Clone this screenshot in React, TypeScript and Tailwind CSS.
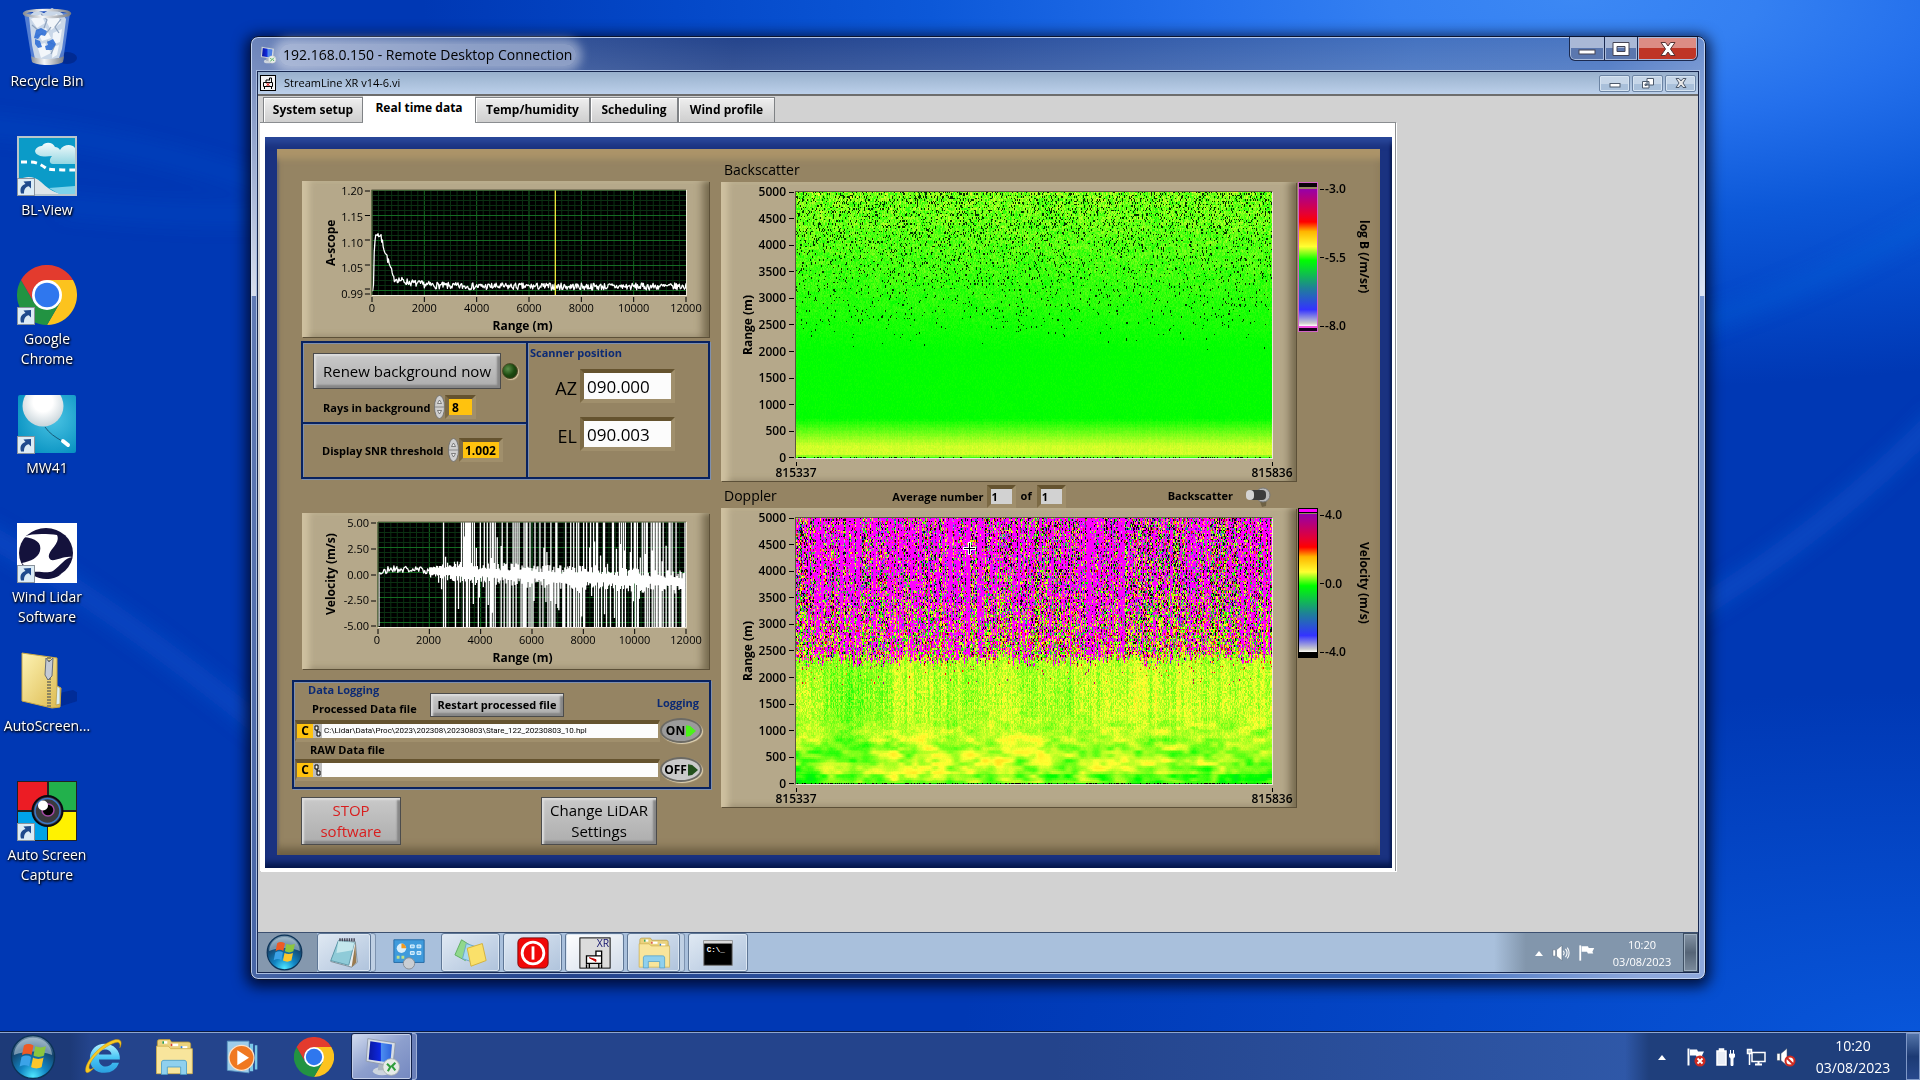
import React, { useEffect, useRef } from 'react';

type Painter = (x: number, r: number, rand: () => number, col: number[]) => [number, number, number];

// Small seeded generator so the plots come out the same on every render
const makeRandom = (seed: number) => () => {
  seed = (seed + 0x6d2b79f5) | 0;
  let t = Math.imul(seed ^ (seed >>> 15), 1 | seed);
  t = (t + Math.imul(t ^ (t >>> 7), 61 | t)) ^ t;
  return ((t ^ (t >>> 14)) >>> 0) / 4294967296;
};

const hash = (x: number, y: number) => {
  const n = Math.sin(x * 127.1 + y * 311.7) * 43758.5453;
  return n - Math.floor(n);
};

const smoothNoise = (x: number, y: number) => {
  const ix = Math.floor(x);
  const iy = Math.floor(y);
  const fx = (x - ix) * (x - ix) * (3 - 2 * (x - ix));
  const fy = (y - iy) * (y - iy) * (3 - 2 * (y - iy));
  const top = hash(ix, iy) * (1 - fx) + hash(ix + 1, iy) * fx;
  const bottom = hash(ix, iy + 1) * (1 - fx) + hash(ix + 1, iy + 1) * fx;
  return top * (1 - fy) + bottom * fy;
};

const SCALE: [number, number, number, number][] = [
  [0, 205, 205, 205],
  [0.13, 51, 51, 255],
  [0.3, 30, 130, 150],
  [0.48, 0, 255, 0],
  [0.6, 255, 255, 50],
  [0.7, 255, 180, 0],
  [0.8, 255, 0, 0],
  [1, 150, 0, 170],
];

const colorAt = (t: number): [number, number, number] => {
  if (t < 0) return [0, 0, 0];
  if (t > 1) return [255, 0, 255];
  for (let i = 1; i < SCALE.length; i++) {
    const a = SCALE[i - 1];
    const b = SCALE[i];
    if (t <= b[0]) {
      const f = (t - a[0]) / (b[0] - a[0]);
      return [a[1] + (b[1] - a[1]) * f, a[2] + (b[2] - a[2]) * f, a[3] + (b[3] - a[3]) * f];
    }
  }
  return [255, 0, 255];
};

const paintBackscatter: Painter = (x, r, rand, col) => {
  if (r < 15) return rand() < 0.3 ? [0, 40, 0] : [60, 255, 20];
  if (r > 1900) {
    const p = Math.pow((r - 1900) / 3100, 1.4) * 0.17;
    if (rand() < p) return [0, 50, 0];
  }
  let t = 0.48;
  if (r < 750) t += 0.098 * Math.min(1, (750 - r) / 520) * (r < 60 ? 0.7 : 1);
  if (r > 2000) {
    const high = (r - 2000) / 3000;
    t += high * (0.02 + rand() * 0.08) + (smoothNoise(x / 8, r / 90) - 0.5) * 0.03 * high;
  }
  t += (rand() - 0.5) * 0.012 + (r < 750 ? col[x] * 0.003 : 0);
  return colorAt(Math.max(0.465, Math.min(0.6, t)));
};

const paintDoppler: Painter = (x, r, rand, col) => {
  if (r < 15) return rand() < 0.3 ? [0, 0, 0] : [0, 200, 0];
  const limit = 2160 + hash(x, 9) * 260 + smoothNoise(x / 14, 5) * 120;
  if (r > limit) {
    const depth = Math.min(1, (r - limit) / 1700);
    const streak = hash(x, 3);
    const magenta = 0.26 + depth * 0.27 + (streak - 0.45) * 0.9 + (smoothNoise(x / 25, 2) - 0.5) * 0.3;
    if (rand() < magenta) return [255, 0, 255];
    const k = rand();
    if (k < 0.04 + depth * 0.22) return [20, 0, 20];
    if (k < 0.24 + depth * 0.18) return colorAt(0.72 + rand() * 0.28);
    return colorAt(rand() < 0.9 - depth * 0.35 ? 0.46 + rand() * 0.22 : rand() * 0.7);
  }
  if (r > 1800 && rand() < (r - 1800) / 14000) return colorAt(0.7 + rand() * 0.3);
  const upper = Math.max(0, Math.min(1, (r - 600) / 900));
  const drift = (smoothNoise(x / 55, r / 1500) - 0.5) * 0.06;
  const streaks = col[x] * 0.016 * upper + (smoothNoise(x / 4, 8) - 0.5) * 0.03 * upper;
  const grain = (rand() - 0.5) * (0.01 + 0.055 * upper);
  const blobs =
    (1 - upper) * ((smoothNoise(x / 16, r / 140) - 0.5) * 0.09 + (smoothNoise(x / 7 + 40, r / 75) - 0.5) * 0.07);
  const floor = r < 200 ? -0.03 : 0;
  return colorAt(0.555 + drift + streaks + grain + blobs + floor);
};

const Heatmap: React.FC<{ paint: Painter; seed: number; label: string }> = ({ paint, seed, label }) => {
  const ref = useRef<HTMLCanvasElement>(null);

  useEffect(() => {
    const canvas = ref.current;
    const ctx = canvas?.getContext('2d');
    if (!canvas || !ctx) return;
    const { width, height } = canvas;
    const rand = makeRandom(seed);
    const col = Array.from({ length: width }, () => rand() * 2 - 1);
    const image = ctx.createImageData(width, height);
    for (let y = 0; y < height; y++) {
      const r = (1 - (y + 0.5) / height) * 5000;
      for (let x = 0; x < width; x++) {
        const [red, green, blue] = paint(x, r, rand, col);
        image.data.set([red, green, blue, 255], (y * width + x) * 4);
      }
    }
    ctx.putImageData(image, 0, 0);
  }, [paint, seed]);

  return <canvas ref={ref} width={478} height={178} aria-label={label} className="block h-full w-full [image-rendering:pixelated]" />;
};

/* ---------- icons ---------- */

const ShortcutArrow = () => (
  <svg viewBox="0 0 18 18" className="absolute bottom-0 left-0 h-[18px] w-[18px]">
    <rect x="0.5" y="0.5" width="17" height="17" fill="#dcecf6" stroke="#8a939c" />
    <path d="M4 15.500c-1.500-5 .5-8.500 4.500-9.500L6.500 3.500 14 3v7.500l-2.200-2.300C8.500 9 7 11 7 15.500z" fill="#1f4a8c" />
  </svg>
);

const RecycleBin = () => (
  <svg viewBox="0 0 60 60" className="h-full w-full">
    <defs>
      <linearGradient id="binRim" x1="0" x2="1">
        <stop offset="0" stopColor="#8a8f96" /><stop offset=".4" stopColor="#f4f6f8" /><stop offset="1" stopColor="#777c84" />
      </linearGradient>
    </defs>
    <ellipse cx="50" cy="51" rx="10" ry="6" fill="#001c70" opacity=".5" />
    <path d="M7 6l8 48c3 5 27 5 31 0l7-48z" fill="#6f95dc" opacity=".75" />
    <path d="M12 9l7-6 8 3 8-5 10 5 4 6-2 16-2 14-3 9-14 3-10-2-3-14z" fill="#c9d7e8" />
    <path d="M14 12l10-5 4 9-8 5zM28 12l12-5 4 9-10 7zM20 24l9-3 5 10-9 3zM36 26l9-4-2 13-8 3zM20 38l8-2 6 10-10 5zM36 40l6-2-2 10-5 3z" fill="#f2f6fa" />
    <path d="M24 7l6 6-3 8M44 12l-6 8 4 6M18 30l8-4M30 34l8 4-4 9M15 18l7 6M34 20l-6 8" fill="none" stroke="#8fa3bd" strokeWidth="1.200" />
    <path d="M19 23l5-2 6 3-2 5-4-1-3 4-4-1zM30 35l6-3 3 5-4 6-6 0-1-4 3-1zM18 32l5 2 2 6-4 1-3-4z" fill="#2f6fd6" opacity=".9" />
    <path d="M14 49c5 4 28 4 33 0l-1 6c-5 4-26 4-31 0z" fill="url(#binRim)" />
    <ellipse cx="30" cy="6.500" rx="23" ry="3.500" fill="none" stroke="url(#binRim)" strokeWidth="2.500" />
  </svg>
);

const BlView = () => (
  <svg viewBox="0 0 60 60" className="h-full w-full">
    <defs><linearGradient id="cloud" x1="0" y1="0" x2="0" y2="1"><stop offset="0" stopColor="#f4fbfc" /><stop offset="1" stopColor="#93d6e2" /></linearGradient></defs>
    <rect width="60" height="60" fill="#b9c6cc" />
    <rect x="2" y="2" width="56" height="56" fill="#0b9bc8" />
    <path d="M18 15c1-4 5-5 7-5 3-5 11-4 13 1 2 0 4 1 5 3 3-5 11-7 15-2v16H36c-4 0-4-5-1-8-7 1-16 1-17-5z" fill="url(#cloud)" />
    <path d="M4 26h9c8 0 13 4 17 7 4 1 20 1 28 1" fill="none" stroke="#fff" strokeWidth="3" strokeDasharray="6 4" />
    <path d="M2 58V44c8-5 16-3 22 2 5 5 12 10 20 12z" fill="#dfe5e8" />
    <path d="M32 52l26-2v8H42z" fill="#7fd3ea" />
  </svg>
);

const Chrome = () => (
  <svg viewBox="0 0 48 48" className="h-full w-full">
    <path d="M24 24L3.200 12A24 24 0 0 1 44.800 12H24z" fill="#e33b2e" />
    <path d="M24 12h20.800A24 24 0 0 1 24 48l10.400-18z" fill="#fcc31e" />
    <path d="M3.200 12L13.600 30 24 36l10.400-6L24 48A24 24 0 0 1 3.200 12z" fill="#229342" />
    <path d="M3.200 12L13.600 30A12 12 0 0 1 24 12z" fill="#e33b2e" />
    <circle cx="24" cy="24" r="12" fill="#fff" />
    <circle cx="24" cy="24" r="9.800" fill="#2f77ee" />
  </svg>
);

const Balloon = () => (
  <svg viewBox="0 0 60 60" className="h-full w-full">
    <defs>
      <radialGradient id="balloonBg" cx=".6" cy=".4" r=".7"><stop offset="0" stopColor="#4cc4e4" /><stop offset="1" stopColor="#0590c0" /></radialGradient>
      <radialGradient id="balloon" cx=".5" cy=".4" r=".6"><stop offset=".4" stopColor="#fff" /><stop offset="1" stopColor="#c8d4da" /></radialGradient>
      <clipPath id="balloonClip"><rect x="1" y="1" width="58" height="58" rx="2" /></clipPath>
    </defs>
    <g clipPath="url(#balloonClip)">
      <rect width="60" height="60" fill="url(#balloonBg)" />
      <circle cx="26" cy="12" r="20.500" fill="url(#balloon)" />
      <path d="M28 33c4 6 10 10 17 14" fill="none" stroke="#175a78" />
      <path d="M46 47l5 4" stroke="#fff" strokeWidth="4" strokeLinecap="round" />
    </g>
  </svg>
);

const WindLidar = () => (
  <svg viewBox="0 0 60 60" className="h-full w-full">
    <rect width="60" height="60" fill="#fff" />
    <ellipse cx="29" cy="30" rx="27" ry="25" fill="#14123c" />
    <path d="M6 14c10-4 24-3 34-2 2 4 0 8-4 13-4 5-6 9-2 12 6 1 12-4 21-3-7 1-11 8-19 14-7 3-12 0-19 1-4-1-8-4-12-9 9-2 16-5 18-12 2-8-4-13-17-14z" fill="#fff" />
    <path d="M16 52c8 6 22 5 28-1-10 2-16-2-28 1z" fill="#14123c" />
  </svg>
);

const ZipFolder = () => (
  <svg viewBox="0 0 60 60" className="h-full w-full">
    <defs><linearGradient id="zip" x1="0" y1="0" x2="1" y2="1"><stop offset="0" stopColor="#fdf3b4" /><stop offset="1" stopColor="#dcb94e" /></linearGradient></defs>
    <path d="M38 56l32-10-14-8-18 4z" fill="#00207c" opacity=".5" />
    <path d="M5 1l35 5v28l4 2-1 19-8 1L5 49z" fill="url(#zip)" stroke="#c9a845" />
    <path d="M40 34l3 2v16l-4 1z" fill="#dbeef4" stroke="#b59b42" strokeWidth=".7" />
    <path d="M32 5v50" stroke="#8e8660" strokeWidth="4" strokeDasharray="2 1" />
    <path d="M29 6l3 4 4-4-1 18-4 4-3-5z" fill="#c4cad4" stroke="#666e7a" />
  </svg>
);

const AutoScreen = () => (
  <svg viewBox="0 0 60 60" className="h-full w-full">
    <rect width="60" height="60" fill="#222" />
    <rect x="1" y="1" width="29" height="28" fill="#ec1c24" />
    <rect x="32" y="1" width="27" height="28" fill="#22b14c" />
    <rect x="1" y="31" width="29" height="28" fill="#00a2e8" />
    <rect x="31" y="31" width="28" height="28" fill="#fff200" />
    <circle cx="30.500" cy="30" r="15" fill="#3a3a3e" stroke="#0a0a12" strokeWidth="2" />
    <circle cx="30.500" cy="30" r="12.500" fill="none" stroke="#3d78c8" strokeWidth="1.500" />
    <circle cx="31" cy="29" r="6" fill="#000" stroke="#a349a4" strokeWidth="1.500" />
    <circle cx="26" cy="24.500" r="5" fill="#fff" />
  </svg>
);

const StartOrb = () => (
  <svg viewBox="0 0 48 48" className="h-full w-full">
    <defs>
      <radialGradient id="orb" cx=".5" cy=".95" r=".9">
        <stop offset="0" stopColor="#4fe6ff" /><stop offset=".35" stopColor="#1286c4" /><stop offset=".75" stopColor="#14456e" /><stop offset="1" stopColor="#6f8ea6" />
      </radialGradient>
    </defs>
    <circle cx="24" cy="24" r="22.500" fill="url(#orb)" stroke="#0c3358" strokeWidth="1.500" />
    <path d="M4 22C5 11 13 4 24 4s19 7 20 18c-12-5-28-5-40 0z" fill="#d4e4ee" opacity=".5" />
    <path d="M14.500 12c3-2 6-2 10 0l-2 10c-3-2-6-2-10 0z" fill="#ee5a24" />
    <path d="M26.500 12.500c4 2 7 2 11 0l-2 10c-4 2-7 2-11 0z" fill="#8cc63f" />
    <path d="M12 24c4-2 7-2 10 0l-2 10c-3-2-6-2-10 0z" fill="#3ba3e8" />
    <path d="M24 24.500c4 2 7 2 11 0l-2 10c-4 2-7 2-11 0z" fill="#fbc62c" />
  </svg>
);

const InternetExplorer = () => (
  <svg viewBox="0 0 48 48" className="h-full w-full">
    <defs><linearGradient id="ie" x1="0" y1="0" x2="0" y2="1"><stop offset="0" stopColor="#b5f0ff" /><stop offset=".5" stopColor="#46c5f5" /><stop offset="1" stopColor="#2a9fe0" /></linearGradient></defs>
    <path d="M43 27H18c0 10 12 11 16 4h8c-3 8-9 12-17 12C14 43 7 36 7 26 7 15 15 8 25 8s19 8 18 19zM18 21h15c-1-8-14-8-15 0z" fill="url(#ie)" />
    <path d="M12 37c-6 7-11 8-10 1C4 26 22 7 38 3c7-1 8 4 5 10 1-5-1-8-6-6C24 11 8 26 6 36c0 4 3 3 6 1z" fill="#f8c922" stroke="#c9920c" strokeWidth=".6" />
  </svg>
);

const Explorer = () => (
  <svg viewBox="0 0 48 48" className="h-full w-full">
    <path d="M4 6c0-2 1-3 3-3h12l2 3h20c2 0 3 1 3 3v32H4z" fill="#ead27e" stroke="#b99a3c" />
    <path d="M10 5h6v3h-6z" fill="#fff" /><path d="M10 5h2v3h-2z" fill="#2d9b46" />
    <path d="M20 8h9v3h-9z" fill="#fff" /><path d="M20 8h2v3h-2z" fill="#d8432f" />
    <path d="M32 11h8v3h-8z" fill="#fff" /><path d="M32 11h2v3h-2z" fill="#2d7fd6" />
    <path d="M3 11h14l3 3h26v30H3z" fill="#f8e59c" stroke="#cfb050" />
    <path d="M9 45V31c0-2 1-3 3-3h24c2 0 3 1 3 3v14h-7V36H16v9z" fill="#8fd0ee" stroke="#4b9cc6" />
  </svg>
);

const MediaPlayer = () => (
  <svg viewBox="0 0 48 48" className="h-full w-full">
    <path d="M4 5h26v38l-26-3z" fill="#9ecdea" stroke="#5b9ac4" />
    <path d="M31 8h4v33h-4zM37 10h3v29h-3z" fill="#7ac8e8" />
    <circle cx="21" cy="25" r="15" fill="#f07820" stroke="#fbe3cc" strokeWidth="1.500" />
    <path d="M16 16l14 9-14 9z" fill="#fff" />
  </svg>
);

const RemoteDesktop = () => (
  <svg viewBox="0 0 48 48" className="h-full w-full">
    <defs><linearGradient id="screen" x1="0" y1="0" x2="1" y2="0"><stop offset="0" stopColor="#0a18a0" /><stop offset=".5" stopColor="#0d27e0" /><stop offset=".55" stopColor="#4b8cf0" /><stop offset="1" stopColor="#2f62dc" /></linearGradient></defs>
    <ellipse cx="24" cy="41" rx="11" ry="5" fill="#cdd5de" />
    <path d="M20 32h9l1 8h-11z" fill="#aab4c0" />
    <path d="M7 2l33 5-3 28-32-6z" fill="#d6dde6" stroke="#8a95a5" />
    <path d="M10 5l26 4-2 22-26-4z" fill="url(#screen)" />
    <circle cx="35" cy="36" r="10" fill="#e6ebe8" stroke="#a8b0ae" />
    <path d="M30 32l4 4-3 5M40 31l-4 4 4 5" fill="none" stroke="#2f9e3c" strokeWidth="2.500" />
  </svg>
);

const Notepad = () => (
  <svg viewBox="0 0 36 36" className="h-full w-full">
    <path d="M13 4l17 2 2 22-6 5L4 27z" fill="#e9eef0" stroke="#7c8c96" />
    <path d="M12 5l17 2-6 24-19-5z" fill="#8fcbd8" stroke="#5b97a8" />
    <path d="M12 5l17 2-2 8-17 3z" fill="#d1edf1" opacity=".8" />
    <path d="M13 4h17" stroke="#445" strokeWidth="3" strokeDasharray="1.500 1" />
    <path d="M30 8l1 20-5 5z" fill="#9a7b50" />
  </svg>
);

const ControlPanel = () => (
  <svg viewBox="0 0 36 36" className="h-full w-full">
    <path d="M2 4h32v24H2z" fill="#3f9bdc" stroke="#2469a4" />
    <circle cx="10" cy="13" r="5" fill="#d9eefa" /><path d="M10 13V8a5 5 0 0 1 5 5z" fill="#f39a1e" />
    <path d="M19.500 9.500h4v3h-4zM26.500 9.500h4v3h-4zM19.500 16.500h4v3h-4zM26.500 16.500h4v3h-4z" fill="#7fc4f0" stroke="#e8f6ff" />
    <path d="M5 21h3v3H5zM10 21h3v3h-3z" fill="#bfe08a" />
    <circle cx="18" cy="29" r="6" fill="#c9ced3" stroke="#858c94" />
  </svg>
);

const StickyNotes = () => (
  <svg viewBox="0 0 36 36" className="h-full w-full">
    <path d="M8 4l11 7-7 15L1 20z" fill="#90d88c" stroke="#5eae60" />
    <path d="M13 8l12 4-4 16-12-4z" fill="#a6d9f0" stroke="#6ba6c8" />
    <path d="M14 13l16-5 4 18-16 6z" fill="#fae06a" stroke="#d2b03c" />
  </svg>
);

const PowerIcon = () => (
  <svg viewBox="0 0 36 36" className="h-full w-full">
    <rect x="2" y="2" width="32" height="32" rx="5" fill="#f00808" stroke="#7c0a0a" />
    <circle cx="18" cy="18" r="11.500" fill="none" stroke="#fff" strokeWidth="3" />
    <path d="M18 11v14" stroke="#fff" strokeWidth="3" />
  </svg>
);

const XrIcon = () => (
  <svg viewBox="0 0 36 36" className="h-full w-full">
    <rect x="2" y="2" width="32" height="32" fill="#dcdcdc" stroke="#000" />
    <text x="33" y="12" textAnchor="end" fontSize="11" fontFamily="Open Sans, sans-serif" fill="#14146e">XR</text>
    <path d="M9 21h16v8H9zM12 29v5M22 29v5M9 34v-4M25 34v-4M19 21v-5h6v5M24 16h-2" fill="#fff" stroke="#000" strokeWidth="1.400" />
    <path d="M12 23l7 2v2z" fill="#c40000" stroke="#c40000" />
  </svg>
);

const LabviewIcon = () => (
  <svg viewBox="0 0 16 16" className="h-4 w-4 shrink-0">
    <rect x="0.500" y="0.500" width="15" height="15" fill="#f4f4f4" stroke="#000" />
    <path d="M3.500 7.500h9v4h-9zM4.500 12v2M11.500 12v2M6 7V5h4M9.500 5V3h2v4" fill="none" stroke="#000" />
    <path d="M6.500 8l3 3M9.500 8l-3 3" stroke="#c00" />
  </svg>
);

const CommandPrompt = () => (
  <svg viewBox="0 0 36 36" className="h-full w-full">
    <rect x="3" y="5" width="30" height="26" fill="#000" stroke="#777" />
    <path d="M3 5h30v3H3z" fill="#d9d9d9" />
    <text x="6" y="17" fontSize="8" fontFamily="Liberation Mono, monospace" fontWeight="700" fill="#fff">C:\_</text>
  </svg>
);

const FlagIcon: React.FC<{ error?: boolean }> = ({ error }) => (
  <svg viewBox="0 0 20 20" className="h-full w-full">
    <path d="M2.500 1.500v17" stroke="#fff" strokeWidth="2" />
    <path d="M4 2.500h7l1 2h6l-2 4 1 2h-6l-1-2H4z" fill="#fff" />
    {error && (
      <>
        <circle cx="14" cy="14" r="5.500" fill="#cf2a20" />
        <path d="M11.500 11.500l5 5M16.500 11.500l-5 5" stroke="#fff" strokeWidth="1.800" />
      </>
    )}
  </svg>
);

const SpeakerIcon: React.FC<{ muted?: boolean }> = ({ muted }) => (
  <svg viewBox="0 0 20 20" className="h-full w-full">
    <path d="M1 6.500h3v7H1zM5 6.500l6-5v17l-6-5z" fill="#fff" stroke="#44546a" strokeWidth=".5" />
    {muted ? (
      <>
        <circle cx="14" cy="14" r="4.500" fill="#fff" stroke="#cf2a20" strokeWidth="2" />
        <path d="M11 11l6 6" stroke="#cf2a20" strokeWidth="2" />
      </>
    ) : (
      <path d="M12.500 7.500q2 2.500 0 5M15 5.500q3.500 4.500 0 9M17 4q4 6 0 12" fill="none" stroke="#fff" strokeWidth="1.200" />
    )}
  </svg>
);

const BatteryIcon = () => (
  <svg viewBox="0 0 20 20" className="h-full w-full">
    <path d="M1 4h9v14H1zM3.500 2h4v2h-4z" fill="#e8edf5" stroke="#fff" strokeWidth="1.500" />
    <path d="M11.500 3v16" stroke="#1b2f58" />
    <path d="M13.500 7h5v2q0 2-1.500 2v7.500h-2V11q-1.500 0-1.500-2zM14.500 3v4M17.500 3v4" fill="#fff" stroke="#fff" />
  </svg>
);

const NetworkIcon = () => (
  <svg viewBox="0 0 20 20" className="h-full w-full">
    <path d="M6 5.500h13v9H6z" fill="#24406e" stroke="#fff" strokeWidth="1.500" />
    <path d="M9 17.500h7M12.500 15v2" stroke="#fff" strokeWidth="2" />
    <path d="M1.500 2.500h4v4h-4zM3.500 7v11" fill="#aebcd0" stroke="#fff" strokeWidth="1.500" />
  </svg>
);

const UpArrow = () => (
  <svg viewBox="0 0 10 6" className="h-[6px] w-[10px]"><path d="M1 6l4-5L9 6z" fill="#fff" /></svg>
);

/* ---------- instrument controls ---------- */

const BEVEL =
  'border border-[#4c4c4c] bg-gradient-to-b from-[#c9c9c9] to-[#adadad] shadow-[inset_2px_2px_2px_#dedede,inset_-3px_-3px_2px_#868686]';
const SUNKEN = 'border-4 border-t-[#65532f] border-r-[#a08f6c] border-b-[#a08f6c] border-l-[#7c6a45]';
const GROUP = 'border-2 border-[#082260] shadow-[inset_1px_1px_0_#7f90ae,1px_1px_0_#7f90ae]';
const RAISED = 'bg-[#b5a88a] shadow-[inset_10px_2px_6px_-3px_#cfc1a0,inset_-10px_-2px_8px_-4px_#766a4e,1px_1px_0_#5c5038]';

const Spinner: React.FC<{ name: string }> = ({ name }) => (
  <button aria-label={name} className="h-6 w-[11px]">
    <svg viewBox="0 0 11 24" className="h-full w-full">
      <ellipse cx="5.500" cy="12" rx="5" ry="11.500" fill="#cfcfcf" stroke="#6b6b6b" strokeWidth=".8" />
      <path d="M1 12h9" stroke="#888" />
      <path d="M3.500 8.500l2-3.500 2 3.500zM3.500 15.500h4l-2 3.500z" fill="#f4f4f4" stroke="#555" strokeWidth=".7" />
    </svg>
  </button>
);

const Readout: React.FC<{ id: string; label: string; value: string }> = ({ id, label, value }) => (
  <div className="flex items-center justify-end gap-[3px]">
    <label htmlFor={id} className="pt-1 text-[18px]">{label}</label>
    <input id={id} readOnly value={value} className={`h-[34px] w-[95px] bg-[#fcfcfc] px-[3px] text-[17px] text-black ${SUNKEN}`} />
  </div>
);

const PathRow: React.FC<{ id: string; value: string; on: boolean }> = ({ id, value, on }) => (
  <div className="flex items-center">
    <div className={`flex h-[22px] flex-1 ${SUNKEN} border-x-2`}>
      <span className="flex w-[16px] items-center justify-center bg-[#ffc20e] text-xs font-bold">C</span>
      <svg viewBox="0 0 9 14" className="h-full w-[9px] bg-[#bdbdbd]"><path d="M2 2h3v4H2zM4 8h3v4H4zM4 6v2" fill="#fff" stroke="#000" /></svg>
      <input id={id} readOnly value={value} className="min-w-0 flex-1 bg-[#fcfcfc] px-[2px] font-['Roboto',sans-serif] text-[8px] text-black" />
    </div>
    <button
      className={`flex h-[25px] w-[42px] items-center justify-center gap-px rounded-[50%] border-2 border-[#6c6a64] text-[12px] font-bold shadow-[1px_1px_1px_#e0d3b4] ${on ? 'bg-[#9b9b9b]' : 'bg-[#cacaca]'}`}
    >
      {on ? 'ON' : 'OFF'}
      <svg viewBox="0 0 12 14" className="h-3 w-[10px]"><path d="M0 0l5 1 7 6-7 6-5 1z" fill={on ? '#4cf21a' : '#23501c'} /></svg>
    </button>
  </div>
);

const xs = [0, 2000, 4000, 6000, 8000, 10000, 12000];

const TracePlot: React.FC<{
  title: string;
  labels: string[];
  ticks: number[];
  trace: string;
  axisClass: string;
  cursor?: number;
}> = ({ title, labels, ticks, trace, axisClass, cursor }) => (
  <div className={`mr-[2px] ml-[10px] pt-[9px] pr-[23px] pb-[5px] pl-[21px] text-[11px] leading-[12px] ${RAISED}`}>
    <div className="flex h-[105px]">
      <div className="w-4 rotate-180 text-center text-[12px] leading-4 font-bold [writing-mode:vertical-rl]">{title}</div>
      <div className={`-my-[5px] flex flex-col justify-between pr-[9px] text-right ${axisClass}`}>
        {labels.map((l) => <span key={l}>{l}</span>)}
      </div>
      <div className="h-full flex-1">
        <svg viewBox="0 0 310 105" preserveAspectRatio="none" className="h-full w-full overflow-visible">
          <rect width="310" height="105" fill="#000" />
          {Array.from({ length: 48 }, (_, i) => (
            <path key={i} d={`M${(i * 310) / 48} 0V105`} stroke={i % 8 ? '#0b3012' : '#146a22'} vectorEffect="non-scaling-stroke" />
          ))}
          {Array.from({ length: 21 }, (_, i) => (
            <path key={i} d={`M0 ${i * 5 + 0.5}H310`} stroke={i % 5 ? '#0b3012' : '#146a22'} vectorEffect="non-scaling-stroke" />
          ))}
          <path d={trace} fill="none" stroke="#fff" strokeWidth="1.300" strokeLinejoin="round" vectorEffect="non-scaling-stroke" />
          {cursor && <path d={`M${cursor} 0V105`} stroke="#f0e63c" strokeWidth="1.300" />}
          <path d="M0 105V0H310" fill="none" stroke="#5c5640" />
          <path d="M0 105.500H310.500V0" fill="none" stroke="#efe9d8" />
          {ticks.map((t) => <path key={t} d={`M-7 ${t}h5`} stroke="#000" />)}
          {xs.map((_, i) => <path key={i} d={`M${(i * 310) / 6} 107v5`} stroke="#000" />)}
        </svg>
      </div>
    </div>
    <div className={`mt-[7px] -mr-4 flex justify-between ${axisClass === 'w-[33px]' ? 'ml-[33px]' : 'ml-[38px]'}`}>
      {xs.map((x) => <span key={x} className="w-8 text-center">{x}</span>)}
    </div>
    <div className="mt-[6px] pl-[36px] text-center text-[12px] font-bold">Range (m)</div>
  </div>
);

const yLabels = [5000, 4500, 4000, 3500, 3000, 2500, 2000, 1500, 1000, 500, 0];

const IntensityPlot: React.FC<{ children: React.ReactNode }> = ({ children }) => (
  <div className={`min-w-0 flex-1 pt-[9px] pr-[23px] pb-[2px] pl-[19px] text-[12px] leading-[12px] font-semibold ${RAISED}`}>
    <div className="flex h-[268px]">
      <div className="w-4 rotate-180 text-center leading-4 font-bold [writing-mode:vertical-rl]">Range (m)</div>
      <div className="-my-[5px] flex w-[39px] flex-col justify-between">
        {yLabels.map((y) => (
          <span key={y} className="flex items-center justify-end gap-[3px] pr-px">
            {y}<i className="h-px w-[5px] bg-black" />
          </span>
        ))}
      </div>
      <div className="relative h-full min-w-0 flex-1 border border-t-[#5c5640] border-r-[#efe9d8] border-b-[#efe9d8] border-l-[#5c5640]">{children}</div>
    </div>
    <div className="mt-[3px] -mr-[20px] ml-[35px] flex justify-between">
      {['815337', '815836'].map((t) => (
        <span key={t} className="flex w-[42px] flex-col items-center gap-[1px]">
          <i className="h-[4px] w-px bg-black" />{t}
        </span>
      ))}
    </div>
  </div>
);

const ColorScale: React.FC<{ title: string; marks: string[]; barClass: string; capTop: string; capBottom: string }> = ({
  title, marks, barClass, capTop, capBottom,
}) => (
  <div className="flex h-[150px] w-[76px] text-[12px] leading-[12px] font-semibold">
    <div className={`flex w-5 flex-col border ${barClass}`}>
      <div className={`h-[4px] ${capTop}`} />
      <div className="flex-1 bg-[linear-gradient(to_bottom,#9600aa_0%,#e60032_18%,#ff0000_24%,#ffb400_31%,#ffff32_42%,#00ff00_52%,#1e8296_72%,#3333ff_88%,#cdcdcd_98%,#ffffff_100%)]" />
      <div className={`h-[5px] ${capBottom}`} />
    </div>
    <div className="flex w-[34px] flex-col justify-between pt-[1px] pl-[2px]">
      {marks.map((m) => (
        <span key={m} className="flex items-center gap-px"><i className="h-px w-[4px] bg-black" />{m}</span>
      ))}
    </div>
    <div className="ml-[4px] w-4 text-center leading-4 font-bold [writing-mode:vertical-rl]">{title}</div>
  </div>
);

const buildScope = () => {
  const rand = makeRandom(7);
  const pts: string[] = [];
  for (let i = 0; i <= 420; i++) {
    const m = (i / 420) * 12000;
    let v = 1.007 + 0.016 * Math.exp(-Math.max(0, m - 900) / 800);
    if (m < 60) v = 1.005;
    else if (m < 120) v = 1.05 + (m - 60) * 0.0009;
    else if (m < 320) v = 1.108 + rand() * 0.006;
    else if (m < 800) v = 1.108 - ((m - 320) / 480) * 0.08;
    v += (rand() - 0.5) * 0.014;
    pts.push(`${((m / 12000) * 310).toFixed(1)} ${((1.2 - v) * 500).toFixed(1)}`);
  }
  return `M${pts.join('L')}`;
};

// Below 2.2 km the signal is a thin line, above it every gate swings between two extremes
const buildVelocity = () => {
  const rand = makeRandom(21);
  const y = (v: number) => (52.5 - v * 10.5).toFixed(1);
  let d = 'M1 104V52';
  for (let x = 1; x < 310; x++) {
    const m = (x / 310) * 12000;
    const base = m < 350 ? 0.2 : 0.6 - m / 9000;
    if (m < 2000) {
      d += `L${x} ${y(base + (rand() - 0.5) * 0.7)}`;
      continue;
    }
    const noise = Math.min(1, (m - 1900) / 1200);
    const p = m < 2300 ? 0 : 0.2 + m / 60000;
    const k = rand();
    const top = rand() < p ? 5 : base + 0.3 + noise * (rand() * 0.8 + (k > 0.85 ? rand() * 3 : 0));
    const bottom = rand() < p * 1.1 ? -5 : base - 0.3 - noise * (rand() * 0.9 + (k < 0.15 ? rand() * 3 : 0));
    d += `M${x} ${y(top)}V${y(bottom)}`;
  }
  return d;
};

const scopeTrace = buildScope();
const velocityTrace = buildVelocity();

const FrontPanel = () => (
  <div className="flex gap-[10px] bg-[#958463] pr-[6px] pb-[10px] pl-[15px] shadow-[inset_0_13px_6px_-3px_#ac9469,inset_0_-10px_8px_-3px_#6d5f43,inset_2px_0_2px_#6b6b70]">
    <div className="flex w-[419px] shrink-0 flex-col pt-8">
      <TracePlot title="A-scope" labels={['1.20', '1.15', '1.10', '1.05', '0.99']} ticks={[1, 25.5, 50, 75, 99, 104]} trace={scopeTrace} axisClass="w-[33px]" cursor={181} />

      <div className={`mt-1 mr-px ml-[9px] flex h-[138px] ${GROUP}`}>
        <div className="flex w-[225px] flex-col border-r-2 border-[#082260]">
          <div className="h-[81px] border-b-2 border-[#082260] pt-[10px] pl-[10px] shadow-[0_1px_0_#7f90ae]">
            <div className="flex items-center">
              <button className={`h-[36px] w-[188px] text-[15px] ${BEVEL}`}>Renew background now</button>
              <span className="ml-px h-4 w-4 rounded-full border border-[#4b4a26] bg-[radial-gradient(circle_at_35%_35%,#5b8f4a,#1d4a10_50%,#12300a)] shadow-[1px_1px_1px_#d8c8a0]" />
            </div>
            <div className="mt-[6px] flex items-center pl-[10px]">
              <label htmlFor="rays" className="w-[111px] pt-[2px] text-[11px] font-bold whitespace-nowrap">Rays in background</label>
              <Spinner name="Rays in background" />
              <input id="rays" defaultValue="8" className={`h-6 w-[31px] bg-[#ffc20e] pl-[3px] text-[12px] font-bold ${SUNKEN}`} />
            </div>
          </div>
          <div className="mt-[14px] flex items-center pl-[19px]">
            <label htmlFor="snr" className="w-[126px] pt-[2px] text-[11px] font-bold whitespace-nowrap">Display SNR threshold</label>
            <Spinner name="Display SNR threshold" />
            <input id="snr" defaultValue="1.002" className={`h-6 w-[44px] bg-[#ffc20e] pl-[2px] text-[12px] font-bold ${SUNKEN}`} />
          </div>
        </div>
        <div className="flex-1 pt-[2px] pr-[33px] shadow-[inset_1px_0_0_#7f90ae]">
          <h2 className="pl-[2px] text-[11px] leading-4 font-bold text-[#0c2a74]">Scanner position</h2>
          <div className="mt-2 flex flex-col gap-[14px]">
            <Readout id="az" label="AZ" value="090.000" />
            <Readout id="el" label="EL" value="090.003" />
          </div>
        </div>
      </div>

      <div className="mt-[34px]">
        <TracePlot title="Velocity (m/s)" labels={['5.00', '2.50', '0.00', '-2.50', '-5.00']} ticks={[1, 27, 53, 79, 104]} trace={velocityTrace} axisClass="w-[39px]" />
      </div>

      <div className={`mt-[11px] h-[109px] pl-px ${GROUP}`}>
        <div className="flex h-[35px] text-[11px] leading-4 font-bold">
          <div className="w-[135px] pl-[13px] whitespace-nowrap">
            <h2 className="text-[#0c2a74]">Data Logging</h2>
            <label htmlFor="proc" className="mt-[3px] block pl-1">Processed Data file</label>
          </div>
          <button className={`mt-[11px] h-6 w-[134px] whitespace-nowrap ${BEVEL}`}>Restart processed file</button>
          <span className="mt-[13px] mr-[10px] ml-auto text-[#0c2a74]">Logging</span>
        </div>
        <div className="mt-px pr-[7px]">
          <PathRow id="proc" value="C:\Lidar\Data\Proc\2023\202308\20230803\Stare_122_20230803_10.hpl" on />
          <label htmlFor="raw" className="block pl-[15px] text-[11px] leading-[14px] font-bold">RAW Data file</label>
          <PathRow id="raw" value="" on={false} />
        </div>
      </div>

      <div className="mt-2 flex justify-between pr-[54px] pl-[9px] text-[15px] leading-[21px]">
        <button className={`h-12 w-[100px] text-[#d81e1e] ${BEVEL}`}>STOP<br />software</button>
        <button className={`h-12 w-[116px] ${BEVEL}`}>Change LiDAR<br />Settings</button>
      </div>
    </div>

    <div className="flex min-w-0 flex-1 flex-col pt-[11px]">
      <h2 className="mb-[2px] pl-[3px] text-[14px] leading-5">Backscatter</h2>
      <div className="flex gap-[2px]">
        <IntensityPlot><Heatmap paint={paintBackscatter} seed={3} label="Backscatter" /></IntensityPlot>
        <ColorScale title="log B (/m/sr)" marks={['-3.0', '-5.5', '-8.0']} barClass="border-[#d264c8]" capTop="bg-[#0a000a] mb-[2px]" capBottom="bg-[#16001a] border-t-2 border-[#f050e0]" />
      </div>
      <div className="flex h-[27px] items-center pt-[3px] pr-[102px] pl-[3px] text-[11px] font-bold">
        <h2 className="text-[14px] leading-5 font-normal">Doppler</h2>
        <label htmlFor="avg" className="mr-[3px] ml-auto pt-[2px]">Average number</label>
        <input id="avg" defaultValue="1" className={`h-[23px] w-[29px] bg-[#d2d2d2] pl-px ${SUNKEN}`} />
        <label htmlFor="avgOf" className="mx-[5px]">of</label>
        <input id="avgOf" defaultValue="1" className={`h-[23px] w-[29px] bg-[#d2d2d2] pl-px ${SUNKEN}`} />
        <span className="ml-[102px]">Backscatter</span>
        <button aria-label="Backscatter" className="ml-[11px] h-6 w-[28px]">
          <svg viewBox="0 0 28 24" className="h-full w-full">
            <path d="M14 12l4 11 4-1 1-11z" fill="#5e5238" opacity=".7" />
            <circle cx="19" cy="11" r="7" fill="#b9b9b9" stroke="#777" />
            <rect x="4" y="6" width="18" height="10" rx="4" fill="#3c3c3c" />
            <rect x="2" y="6" width="8" height="10" rx="4" fill="#d4d4d4" />
          </svg>
        </button>
      </div>
      <div className="flex gap-[2px]">
        <IntensityPlot>
          <Heatmap paint={paintDoppler} seed={11} label="Doppler" />
          <svg viewBox="0 0 13 13" className="absolute top-[9%] left-[35%] h-[13px] w-[13px]">
            <path d="M6.500 0v13M0 6.500h13" stroke="#fff" strokeWidth="3" />
            <path d="M6.500 1v11M1 6.500h11" stroke="#000" />
          </svg>
        </IntensityPlot>
        <ColorScale title="Velocity (m/s)" marks={['4.0', '0.0', '-4.0']} barClass="border-black" capTop="bg-[#ff00ff] border-b border-black mb-px" capBottom="bg-black" />
      </div>
    </div>
  </div>
);

/* ---------- windows ---------- */

const tabs = [
  { name: 'System setup', width: 'w-[100px]' },
  { name: 'Real time data', width: 'w-[112px]' },
  { name: 'Temp/humidity', width: 'w-[115px]' },
  { name: 'Scheduling', width: 'w-[88px]' },
  { name: 'Wind profile', width: 'w-[97px]' },
];

const MDI_BUTTON = 'flex h-[17px] w-[31px] items-center justify-center rounded-[2px] border border-[#6b83a3] bg-gradient-to-b from-[#c6d6e8] from-50% to-[#a9c0da] to-50% shadow-[inset_0_0_0_1px_#d5e3f1]';
const CAPTION = 'flex h-6 items-center justify-center border border-t-0 border-[#1b2a50] shadow-[inset_0_0_0_1px_#a9bbdc]';

const remoteTasks = [
  { name: 'Notepad', icon: <Notepad />, box: 'w-[54px]', stacked: true },
  { name: 'Control Panel', icon: <ControlPanel />, box: 'w-[59px] border-transparent! bg-none! shadow-none!', stacked: false },
  { name: 'Sticky Notes', icon: <StickyNotes />, box: 'w-[59px]', stacked: false },
  { name: 'Power', icon: <PowerIcon />, box: 'w-[59px]', stacked: false },
  { name: 'StreamLine XR', icon: <XrIcon />, box: 'w-[59px] from-white! to-[#d2dcea]!', stacked: false },
  { name: 'Explorer', icon: <Explorer />, box: 'w-[53px]', stacked: true },
  { name: 'Command Prompt', icon: <CommandPrompt />, box: 'w-[60px]', stacked: false },
];

const RemoteTaskbar = () => (
  <div className="flex h-10 shrink-0 items-stretch border-t border-[#3c5070] bg-[#a9c0dc]">
    <button aria-label="Start" className="flex w-[59px] items-center bg-[#8598ae] pl-2">
      <span className="h-[37px] w-[37px]"><StartOrb /></span>
    </button>
    <div className="flex gap-[3px]">
      {remoteTasks.map((t) => (
        <div key={t.name} className="flex">
          <button
            aria-label={t.name}
            className={`flex items-center justify-center rounded-[3px] border border-[#5f7796] bg-gradient-to-br from-[#e0e9f3] to-[#afc3dc] shadow-[inset_0_0_0_1px_#dce7f3] ${t.box}`}
          >
            <span className="h-[34px] w-[34px]">{t.icon}</span>
          </button>
          {t.stacked && <i className="w-[5px] rounded-r-[3px] border border-l-0 border-[#7d93b0] bg-[#bfd0e4]" />}
        </div>
      ))}
    </div>
    <div className="ml-auto flex items-center gap-2 bg-[linear-gradient(to_right,transparent,#8296ac_32px)] pl-[40px] text-white">
      <UpArrow />
      <span className="h-[18px] w-[18px]"><SpeakerIcon /></span>
      <span className="h-[18px] w-[18px]"><FlagIcon /></span>
      <div className="ml-[5px] w-[66px] text-center text-[11px] leading-[17px] whitespace-nowrap">10:20<br />03/08/2023</div>
      <button aria-label="Show desktop" className="h-full w-[15px] border border-[#3f5064] bg-gradient-to-b from-[#8595a6] via-[#566577] to-[#7b8b9c] shadow-[inset_0_0_0_1px_#9fafbf]" />
    </div>
  </div>
);

const RemoteWindow = () => (
  <section className="absolute top-9 right-[214px] bottom-[100px] left-[250px] flex flex-col rounded-lg border border-[#0a1430] bg-[linear-gradient(to_bottom,transparent,rgba(255,255,255,.75)_259px,transparent_259px),linear-gradient(100deg,#6c84ba_0%,#3a5a9e_14%,#24448c_30%,#2c509c_45%,#4472c0_72%,#4a76c2_84%,#8ea8dc_96%)] px-[7px] pb-[7px] shadow-[inset_0_0_0_1px_rgba(210,225,250,.8),0_3px_14px_4px_rgba(0,0,20,.75)]">
    <header className="flex h-[35px] shrink-0 items-start">
      <span className="mt-[9px] ml-px h-[18px] w-[18px]"><RemoteDesktop /></span>
      <h1 className="mt-[7px] ml-[2px] rounded-full bg-white/40 px-[4px] text-[14px] leading-[22px] text-black shadow-[0_0_10px_6px_rgba(255,255,255,.4)]">
        192.168.0.150 - Remote Desktop Connection
      </h1>
      <div className="ml-auto flex">
        <button aria-label="Minimize" className={`w-[36px] rounded-bl-md bg-gradient-to-b from-[#a9b8d6] from-50% to-[#5b77ae] to-50% ${CAPTION}`}>
          <svg viewBox="0 0 18 18" className="h-[18px] w-[18px]"><rect x="1" y="10" width="16" height="4" fill="#fff" stroke="#445" /></svg>
        </button>
        <button aria-label="Maximize" className={`w-[33px] border-l-0 bg-gradient-to-b from-[#a9b8d6] from-50% to-[#5b77ae] to-50% ${CAPTION}`}>
          <svg viewBox="0 0 18 18" className="h-[18px] w-[18px]"><path d="M1 2.500h16v13H1zM5 6.500v5h8v-5z" fill="#fff" stroke="#445" fillRule="evenodd" /></svg>
        </button>
        <button aria-label="Close" className={`w-[60px] rounded-br-md border-l-0 bg-gradient-to-b from-[#dc8c84] from-50% to-[#bf3526] to-50% ${CAPTION}`}>
          <svg viewBox="0 0 18 18" className="h-[18px] w-[18px]"><path d="M2 2.500h4.500L9 6l2.500-3.500H16L11.500 9l4.500 6.500h-4.500L9 12l-2.500 3.500H2L6.500 9z" fill="#fff" stroke="#533" /></svg>
        </button>
      </div>
    </header>

    <div className="flex min-h-0 flex-1 flex-col shadow-[0_0_0_1px_#16264e,0_0_0_2px_#a9bde0]">
      <div className="flex h-[22px] shrink-0 items-center bg-gradient-to-b from-[#98b0cc] to-[#bcd0ea] pl-[2px] text-black">
        <LabviewIcon />
        <span className="ml-2 text-[11px]">StreamLine XR v14-6.vi</span>
        <div className="mr-[2px] ml-auto flex gap-[2px]">
          <button aria-label="Minimize" className={MDI_BUTTON}>
            <svg viewBox="0 0 12 12" className="h-3 w-3"><rect x="1" y="6.500" width="10" height="3.500" fill="#fff" stroke="#4d5a6c" /></svg>
          </button>
          <button aria-label="Restore" className={MDI_BUTTON}>
            <svg viewBox="0 0 12 12" className="h-3 w-3"><path d="M5 1.500h6.500V8H5zM.5 4.500H7V11H.5zM3 7v1.500h1.500V7z" fill="#fff" stroke="#4d5a6c" fillRule="evenodd" /></svg>
          </button>
          <button aria-label="Close" className={MDI_BUTTON}>
            <svg viewBox="0 0 12 12" className="h-3 w-3"><path d="M1 1.500h3L6 4l2-2.500h3L8 6l3 4.500H8L6 8l-2 2.500H1L4 6z" fill="#e8e8e8" stroke="#4d5a6c" /></svg>
          </button>
        </div>
      </div>

      <main className="min-h-0 flex-1 overflow-hidden border-t-2 border-[#6d6d6d] bg-[#d2d2d2] pl-[2px] text-black">
        <nav className="flex h-[26px] items-end pl-[3px] text-[12px] font-bold">
          {tabs.map((t, i) => (
            <button
              key={t.name}
              className={`whitespace-nowrap ${t.width} ${
                i === 1
                  ? 'relative -mb-px h-[27px] bg-white pb-[3px]'
                  : 'h-[25px] border border-b-0 border-[#7f8285] bg-gradient-to-b from-[#efefef] via-[#dedede] to-[#cfcfcf] shadow-[inset_1px_1px_0_#fff]'
              }`}
            >
              {t.name}
            </button>
          ))}
        </nav>
        <div className="w-[79%] border-t border-r border-[#8a8d90] bg-white pt-[14px] pr-[3px] pb-[3px] pl-[5px] shadow-[1px_1px_0_#fff]">
          <div className="bg-[#1a3280] px-3 pt-3 pb-[13px] shadow-[inset_0_10px_6px_-4px_#2a489a,inset_0_-8px_6px_-3px_#04164a,inset_-2px_0_2px_#0a1a50]">
            <FrontPanel />
          </div>
        </div>
      </main>

      <RemoteTaskbar />
    </div>
  </section>
);

const shortcuts = [
  { name: 'Recycle Bin', icon: <RecycleBin />, link: false },
  { name: 'BL-View', icon: <BlView />, link: true },
  { name: 'Google Chrome', icon: <Chrome />, link: true },
  { name: 'MW41', icon: <Balloon />, link: true },
  { name: 'Wind Lidar Software', icon: <WindLidar />, link: true },
  { name: 'AutoScreen...', icon: <ZipFolder />, link: false },
  { name: 'Auto Screen Capture', icon: <AutoScreen />, link: true },
];

const pinned = [
  { name: 'Internet Explorer', icon: <InternetExplorer /> },
  { name: 'Explorer', icon: <Explorer /> },
  { name: 'Media Player', icon: <MediaPlayer /> },
  { name: 'Chrome', icon: <Chrome /> },
];

const App: React.FC = () => {
  return (
    <div className="relative flex h-screen flex-col overflow-hidden bg-[#0038b4] bg-[radial-gradient(ellipse_60%_36%_at_82%_0%,#3c88f4_0%,#3480f2_16%,#2470ec_32%,#0c58d8_56%,#0448c8_78%,transparent_100%),radial-gradient(ellipse_50%_32%_at_100%_96%,#0856da_0%,transparent_100%)] font-['Open_Sans','Noto_Sans',sans-serif] text-white">
      <svg viewBox="0 0 1920 1080" preserveAspectRatio="none" className="absolute inset-0 h-full w-full">
        <defs><filter id="soft"><feGaussianBlur stdDeviation="9" /></filter></defs>
        <g fill="none" stroke="#1568e0" strokeWidth="22" filter="url(#soft)">
          <path d="M-20 125Q140 140 280 190M60 205Q180 218 280 214" opacity=".14" />
          <path d="M-20 530Q120 610 290 750" opacity=".3" />
          <path d="M1680 330Q1820 285 1940 215" opacity=".25" />
          <path d="M1680 620Q1830 530 1940 415" opacity=".35" />
        </g>
      </svg>

      <div className="relative flex w-[94px] flex-1 flex-col pt-[7px]">
        {shortcuts.map((s) => (
          <button key={s.name} className="flex h-[129px] shrink-0 flex-col items-center text-[14px] leading-5 [text-shadow:1px_1px_2px_#000,0_1px_3px_#000]">
            <span className="relative mb-1 h-[60px] w-[60px]">
              {s.icon}
              {s.link && <ShortcutArrow />}
            </span>
            <span className={s.name === 'AutoScreen...' ? '' : 'w-[84px]'}>{s.name}</span>
          </button>
        ))}
      </div>

      <RemoteWindow />

      <footer className="relative flex h-12 shrink-0 items-center border-t border-[#8ea6d0] bg-[linear-gradient(to_right,#1d3a78_0,#1d3a78_70px,#24448c_90px,#24448c_55%,#2f58a8_85%)] shadow-[0_-1px_0_#0a1a40]">
        <button aria-label="Start" className="ml-[10px] h-[46px] w-[46px]"><StartOrb /></button>
        <div className="ml-[28px] flex items-center gap-[30px]">
          {pinned.map((p) => (
            <button key={p.name} aria-label={p.name} className="h-10 w-10">{p.icon}</button>
          ))}
        </div>
        <button aria-label="Remote Desktop Connection" className="ml-[17px] flex h-full w-[61px] items-center justify-center rounded-[3px] border border-[#10204a] bg-gradient-to-br from-[#d3dcef] via-[#8d9fcd] to-[#7488c0] shadow-[inset_0_0_0_1px_#c4cfe8]">
          <span className="h-10 w-10"><RemoteDesktop /></span>
        </button>
        <i className="h-full w-[5px] rounded-r-[3px] border border-l-0 border-[#9fb0d6] bg-[#6a7fb8]" />
        <div className="ml-auto flex h-full items-center gap-[10px] bg-[linear-gradient(to_right,transparent,#1f3f7c_24px)] pl-[32px]">
          <span className="mr-[9px]"><UpArrow /></span>
          {[<FlagIcon key="flag" error />, <BatteryIcon key="power" />, <NetworkIcon key="net" />, <SpeakerIcon key="sound" muted />].map((icon) => (
            <span key={icon.key} className="h-5 w-5">{icon}</span>
          ))}
          <div className="mr-[3px] ml-[7px] w-[80px] text-center text-[14px] leading-[22px] whitespace-nowrap">10:20<br />03/08/2023</div>
          <button aria-label="Show desktop" className="h-full w-[14px] border border-[#7f98c8] bg-gradient-to-b from-[#5474a8] via-[#1c3a74] to-[#28488c]" />
        </div>
      </footer>
    </div>
  );
};

export default App;
